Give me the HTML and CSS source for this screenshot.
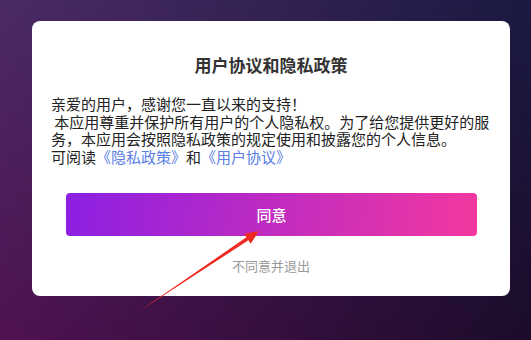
FILE: index.html
```html
<!DOCTYPE html>
<html lang="zh-CN">
<head>
<meta charset="utf-8">
<title>用户协议和隐私政策</title>
<link rel="stylesheet" href="styles.css">
</head>
<body>
<div class="backdrop"></div>
<main class="stage">
  <section class="dialog">
    <h1 class="dialog-title">用户协议和隐私政策</h1>
    <p class="dialog-text">亲爱的用户，感谢您一直以来的支持！<br>&nbsp;本应用尊重并保护所有用户的个人隐私权。为了给您提供更好的服<br>务，本应用会按照隐私政策的规定使用和披露您的个人信息。<br>可阅读<a class="link" href="#">《隐私政策》</a>和<a class="link" href="#">《用户协议》</a></p>
    <button class="agree-btn" type="button">同意</button>
    <div class="disagree">不同意并退出</div>
  </section>
</main>
<svg class="arrow" width="531" height="340" viewBox="0 0 531 340" aria-hidden="true">
  <polygon points="138,312 246.4,237.3 244.1,233.8 259,231 250.7,243.8 248.4,240.3" fill="#ee2a24"/>
</svg>
</body>
</html>
```
FILE: styles.css
```css
* { box-sizing: border-box; }

html, body {
  margin: 0;
  padding: 0;
}

body {
  width: 531px;
  height: 340px;
  overflow: hidden;
  position: relative;
  font-family: "Noto Sans CJK SC", "Noto Sans", sans-serif;
  background: linear-gradient(to right, #4b2b66, #1b1a42);
}

.backdrop {
  position: absolute;
  inset: 0;
  background: linear-gradient(to right, #501252, #1c0c2a);
  -webkit-mask-image: linear-gradient(to bottom, transparent, #000);
  mask-image: linear-gradient(to bottom, transparent, #000);
}

.stage {
  position: relative;
  padding: 21px 21px 0 32px;
}

.dialog {
  width: 478px;
  background: #fff;
  border-radius: 8px;
  padding: 32px 19px 21px 19px;
  display: flex;
  flex-direction: column;
}

.dialog-title {
  margin: 0;
  font-size: 17px;
  line-height: 24px;
  font-weight: 700;
  color: #333;
  text-align: center;
}

.dialog-text {
  margin: 18px 0 0 0;
  font-size: 15px;
  line-height: 17.5px;
  color: #222;
  white-space: nowrap;
}

.link {
  color: #5a7ee6;
  text-decoration: none;
}

.agree-btn {
  margin: 28px 14px 0 15px;
  height: 43px;
  border: 0;
  border-radius: 4px;
  background: linear-gradient(100deg, #8b1fe3, #f3389f);
  color: #fff;
  font-family: inherit;
  font-size: 15px;
  font-weight: 500;
  padding: 0;
}

.disagree {
  margin-top: 21px;
  font-size: 13px;
  line-height: 18px;
  color: #999;
  text-align: center;
}

.arrow {
  position: absolute;
  left: 0;
  top: 0;
  pointer-events: none;
}
```
